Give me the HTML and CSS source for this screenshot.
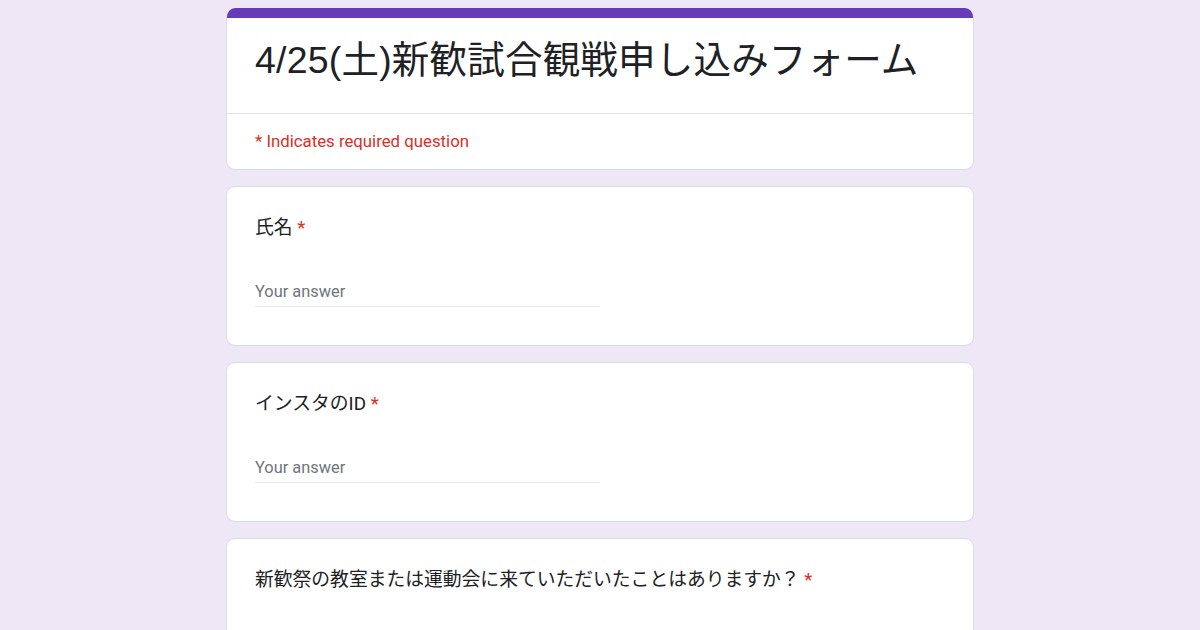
FILE: index.html
```html
<!DOCTYPE html>
<html lang="ja">
<head>
<meta charset="utf-8">
<title>4/25(土)新歓試合観戦申し込みフォーム</title>
<link rel="stylesheet" href="styles.css">
</head>
<body>
<main class="form">
  <section class="card header-card">
    <div class="accent"></div>
    <div class="title-block">
      <h1 class="title">4/25(土)新歓試合観戦申し込みフォーム</h1>
    </div>
    <div class="required-note">* Indicates required question</div>
  </section>

  <section class="card question">
    <div class="label">氏名 <span class="star">*</span></div>
    <div class="answer">Your answer</div>
  </section>

  <section class="card question">
    <div class="label">インスタのID <span class="star">*</span></div>
    <div class="answer">Your answer</div>
  </section>

  <section class="card question">
    <div class="label">新歓祭の教室または運動会に来ていただいたことはありますか？ <span class="star">*</span></div>
    <div class="options">
      <div class="option"><span class="radio"></span><span class="opt-text">はい</span></div>
      <div class="option"><span class="radio"></span><span class="opt-text">いいえ</span></div>
    </div>
  </section>
</main>
</body>
</html>
```
FILE: styles.css
```css
html, body {
  margin: 0;
  padding: 0;
}
body {
  background: #ede7f6;
  font-family: Roboto, "Liberation Sans", "Noto Sans CJK JP", sans-serif;
  color: #202124;
  height: 630px;
  overflow: hidden;
}
.form {
  width: 748px;
  margin: 8px auto 0;
  display: flex;
  flex-direction: column;
  gap: 16px;
}
.card {
  background: #fff;
  border: 1px solid #dadce0;
  border-radius: 9px;
  box-sizing: border-box;
}
.header-card {
  border-top: none;
  overflow: hidden;
}
.accent {
  height: 10px;
  background: #673ab7;
}
.title-block {
  padding: 17px 28px 0;
  height: 78px;
  border-bottom: 1px solid #e3e3e6;
}
.title {
  margin: 0;
  font-family: "Liberation Sans", "Noto Sans CJK JP", sans-serif;
  font-weight: 400;
  font-size: 37.5px;
  letter-spacing: 0.2px;
  line-height: 50px;
  color: #202124;
}
.required-note {
  padding: 17px 28px 0;
  height: 55px;
  box-sizing: border-box;
  font-size: 16.8px;
  line-height: 20px;
  color: #d93025;
}
.question {
  padding: 29px 28px 38px;
  height: 160px;
}
.label {
  font-family: Roboto, "Noto Sans CJK JP", sans-serif;
  font-size: 18.8px;
  line-height: 24px;
  color: #202124;
}
.star {
  color: #d93025;
}
.answer {
  margin-top: 40px;
  width: 345px;
  font-size: 16.4px;
  line-height: 24px;
  padding-bottom: 2px;
  border-bottom: 1px solid #e8e8ea;
  color: #70757a;
}
.options {
  margin-top: 52px;
  display: flex;
  flex-direction: column;
  gap: 16px;
}
.option {
  display: flex;
  align-items: center;
  gap: 24px;
  font-size: 16.4px;
}
.radio {
  width: 20px;
  height: 20px;
  border: 2px solid #5f6368;
  border-radius: 50%;
  box-sizing: border-box;
}
```
